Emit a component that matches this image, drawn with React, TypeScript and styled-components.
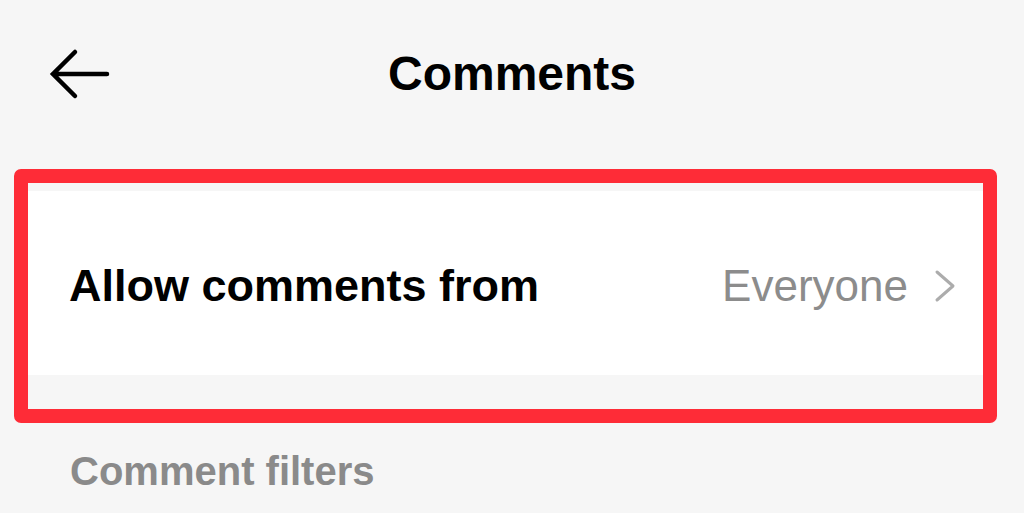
import React from 'react';
import styled, { createGlobalStyle } from 'styled-components';

const GlobalStyle = createGlobalStyle`
  html, body {
    margin: 0;
    padding: 0;
    background: #f6f6f6;
  }
  body {
    font-family: "Liberation Sans", Arial, sans-serif;
    -webkit-font-smoothing: antialiased;
  }
`;

function BackArrow() {
  return (
    <svg width="62" height="52" viewBox="0 0 62 52" fill="none">
      <path
        d="M26 4 L4 26 L26 48 M4 26 H58"
        stroke="#000"
        strokeWidth="4.5"
        strokeLinecap="round"
        strokeLinejoin="miter"
      />
    </svg>
  );
}

function Chevron() {
  return (
    <svg width="22" height="34" viewBox="0 0 22 34" fill="none">
      <path
        d="M3 3 L19 17 L3 31"
        stroke="#acacac"
        strokeWidth="3"
        strokeLinecap="round"
        strokeLinejoin="round"
      />
    </svg>
  );
}

export default function App() {
  return (
    <>
      <GlobalStyle />
      <UIPage>
        <UIHeader>
          <UIBackButton aria-label="Back">
            <BackArrow />
          </UIBackButton>
          <UITitle>Comments</UITitle>
          <span />
        </UIHeader>

        <UIHighlight>
          <UISettingRow>
            <UISettingLabel>Allow comments from</UISettingLabel>
            <UISettingValue>
              <span>Everyone</span>
              <Chevron />
            </UISettingValue>
          </UISettingRow>
          <UIRowGap />
        </UIHighlight>

        <UISectionLabel>Comment filters</UISectionLabel>
      </UIPage>
    </>
  );
}

const UIPage = styled.div`
  width: 1024px;
  height: 513px;
  overflow: hidden;
  background: #f6f6f6;
`;

const UIHeader = styled.header`
  height: 148px;
  display: grid;
  grid-template-columns: 1fr auto 1fr;
  align-items: center;
`;

const UIBackButton = styled.button`
  justify-self: start;
  margin-left: 49px;
  padding: 0;
  border: 0;
  background: none;
  display: flex;
  align-items: center;
`;

const UITitle = styled.h1`
  margin: 0;
  font-size: 48px;
  line-height: 1;
  font-weight: 700;
  color: #000;
`;

const UIHighlight = styled.section`
  margin: 21px 27px 0 14px;
  border: 14px solid #fe2c37;
  border-radius: 7px;
  padding-top: 8px;
  background: #f6f6f6;
`;

const UISettingRow = styled.div`
  height: 184px;
  box-sizing: border-box;
  padding: 5px 27px 0 41px;
  background: #fff;
  display: flex;
  align-items: center;
  justify-content: space-between;
`;

const UISettingLabel = styled.div`
  font-size: 45px;
  line-height: 1;
  font-weight: 700;
  color: #000;
`;

const UISettingValue = styled.div`
  display: flex;
  align-items: center;
  gap: 26px;
  font-size: 44px;
  line-height: 1;
  color: #8c8c8c;
`;

const UIRowGap = styled.div`
  height: 34px;
`;

const UISectionLabel = styled.h2`
  margin: 28px 0 0 70px;
  font-size: 40px;
  line-height: 1;
  font-weight: 700;
  color: #8a8a8a;
`;
